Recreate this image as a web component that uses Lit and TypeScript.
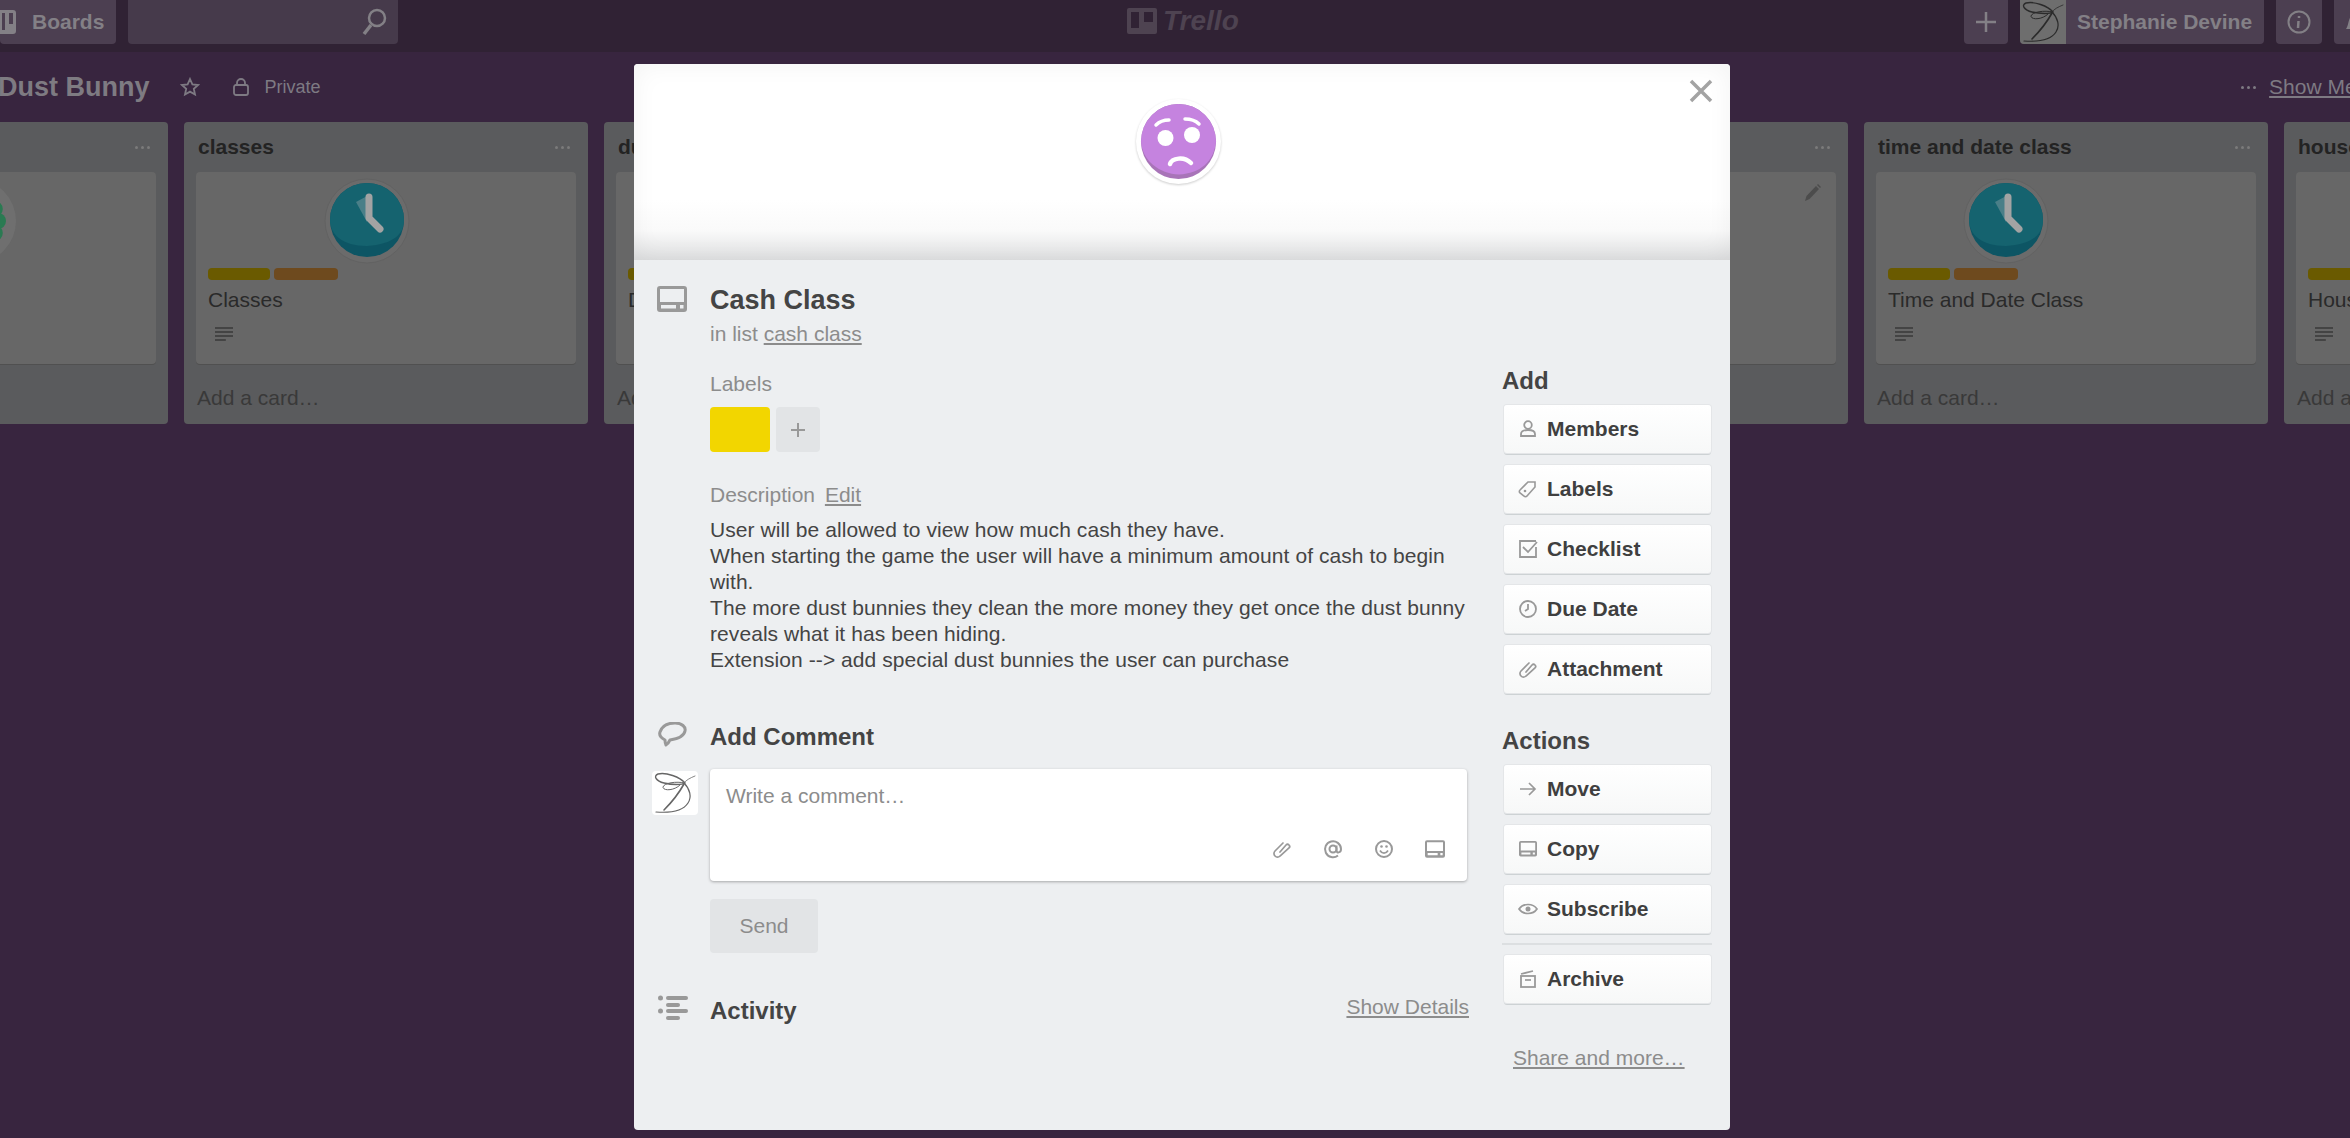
import { LitElement, html, svg, css } from "lit";
import { customElement } from "lit/decorators.js";

const scribble = svg`
  <g fill="none" stroke="currentColor" stroke-linecap="round">
    <path d="M33 12C28 6 14 1 6 3 1 5 4 10 12 12c8 2 18 2 21 0" stroke-width="1.400"/>
    <path d="M33 12c-9-2-21 0-22 4 0 4 11 4 17-2" stroke-width="1"/>
    <path d="M43 5c-5 2-9 4-12 8" stroke-width=".8"/>
    <path d="M32 13c-5 9-13 19-20 26" stroke-width="1.600"/>
    <path d="M32 12c6 6 8 14 4 20-5 8-18 10-32 9" stroke-width="1.200"/>
  </g>`;

const cardBackIcon = svg`<path fill-rule="evenodd" d="M3 0h24a3 3 0 0 1 3 3v20a3 3 0 0 1-3 3H3a3 3 0 0 1-3-3V3a3 3 0 0 1 3-3zm0 3v13h24V3H3zm1 16v3.500h15V19H4zm19 0v3.500h3.500V19H23z"/>`;

const icons: Record<string, unknown> = {
  member: svg`<circle cx="10" cy="6" r="3.800" fill="none" stroke="currentColor" stroke-width="1.800"/><path d="M3 17v-2c0-3 3-4 7-4s7 1 7 4v2z" fill="none" stroke="currentColor" stroke-width="1.800"/>`,
  label: svg`<path d="M2 11l8-8h7v5l-8 9a2 2 0 0 1-3 0l-4-3a2 2 0 0 1 0-3z" fill="none" stroke="currentColor" stroke-width="1.600"/><circle cx="7" cy="12" r="1.300" fill="currentColor"/>`,
  check: svg`<path d="M18 8v10H2V2h16" fill="none" stroke="currentColor" stroke-width="1.800"/><path d="M5 8l5 5 9-10" fill="none" stroke="currentColor" stroke-width="1.800"/>`,
  clock: svg`<circle cx="10" cy="10" r="8" fill="none" stroke="currentColor" stroke-width="1.800"/><path d="M10 5v5l-3 2" fill="none" stroke="currentColor" stroke-width="1.800"/>`,
  clip: svg`<path d="M8 13l6-7a2.100 2.100 0 0 1 3 3l-9 8a3.500 3.500 0 0 1-5-5l8-8" fill="none" stroke="currentColor" stroke-width="1.700" stroke-linecap="round"/>`,
  move: svg`<path d="M2 10h15M11 4l6 6-6 6" fill="none" stroke="currentColor" stroke-width="1.700"/>`,
  copy: svg`<g transform="translate(1 2) scale(.6)" fill="currentColor">${cardBackIcon}</g>`,
  eye: svg`<path d="M1 10c4-6 14-6 18 0-4 6-14 6-18 0z" fill="none" stroke="currentColor" stroke-width="1.700"/><circle cx="10" cy="10" r="2.500" fill="currentColor"/>`,
  archive: svg`<path d="M3 5l12-3" stroke="currentColor" stroke-width="1.700" fill="none"/><rect x="3" y="7" width="14" height="11" fill="none" stroke="currentColor" stroke-width="1.800"/><path d="M7 11h6" stroke="currentColor" stroke-width="1.700"/>`,
  at: svg`<circle cx="10" cy="10" r="3.500" fill="none" stroke="currentColor" stroke-width="2"/><path d="M13.500 6.500v5c0 3 4.500 2.500 4.500-1.500a8 8 0 1 0-3 6.500" fill="none" stroke="currentColor" stroke-width="2"/>`,
  smile: svg`<circle cx="10" cy="10" r="8" fill="none" stroke="currentColor" stroke-width="2"/><circle cx="7.500" cy="7.500" r="1.300" fill="currentColor"/><circle cx="12.500" cy="7.500" r="1.300" fill="currentColor"/><path d="M6 11.500c2 3.500 6 3.500 8 0" fill="none" stroke="currentColor" stroke-width="1.700"/>`,
};

function icon(name: string, size = 20) {
  return html`<svg width=${size} height=${size} viewBox="0 0 20 20">${icons[name]}</svg>`;
}

const clockSticker = svg`
  <circle cx="43" cy="43" r="42" fill="#6b6b6b" stroke="#626262"/>
  <circle cx="43" cy="42" r="37" fill="#0d5564"/>
  <path d="M6 42a37 37 0 0 1 74 0c0 14-10 24-37 26C18 68 6 56 6 42z" fill="#15636f"/>
  <path d="M45 17L32 24l11 20z" fill="#4a7f88"/>
  <path d="M45 19v21l11 11" fill="none" stroke="#a3a3a3" stroke-width="7" stroke-linecap="round" stroke-linejoin="round"/>`;

const greenSticker = svg`
  <circle cx="43" cy="43" r="42" fill="#6f6f6f"/>
  <circle cx="43" cy="43" r="28" fill="#246b48"/>
  ${[-60, -30, 0, 30, 60].map((a) => {
    const r = (a * Math.PI) / 180;
    return svg`<circle cx=${43 + 24 * Math.cos(r)} cy=${43 + 24 * Math.sin(r)} r="8" fill="#2a7a52"/>`;
  })}`;

interface Board {
  name: string;
  card?: string;
  labels?: number[];
  sticker?: unknown;
  stickerLeft?: number;
  pencil?: boolean;
}

const lists: Board[] = [
  { name: "", sticker: greenSticker, stickerLeft: 155 },
  { name: "classes", card: "Classes", labels: [62, 64], sticker: clockSticker, stickerLeft: 128 },
  { name: "dust bunny class", card: "Dust Bunny Class", labels: [62, 64] },
  { name: "", card: "", labels: [] },
  { name: "", pencil: true },
  { name: "time and date class", card: "Time and Date Class", labels: [62, 64], sticker: clockSticker, stickerLeft: 87 },
  { name: "house class", card: "House Class", labels: [62, 64] },
];

const addButtons = [
  ["member", "Members"],
  ["label", "Labels"],
  ["check", "Checklist"],
  ["clock", "Due Date"],
  ["clip", "Attachment"],
];
const actionButtons = [
  ["move", "Move"],
  ["copy", "Copy"],
  ["eye", "Subscribe"],
];

@customElement("app-root")
export class AppRoot extends LitElement {
  static styles = css`
    :host {
      display: block;
      position: relative;
      height: 1138px;
      overflow: hidden;
      background: #38253f;
      font-family: "Liberation Sans", Arial, sans-serif;
      font-size: 21px;
      color: #444;
    }
    svg {
      display: block;
      flex: none;
    }

    .topbar {
      display: flex;
      align-items: flex-start;
      height: 52px;
      background: #302234;
      color: #838086;
      font-weight: 700;
    }
    .topbar__btn {
      display: flex;
      align-items: center;
      justify-content: center;
      height: 44px;
      border-radius: 0 0 4px 4px;
      background: #4c3f51;
      flex: none;
    }
    .topbar__boards {
      width: 116px;
      justify-content: flex-start;
      gap: 16px;
    }
    .topbar__search {
      width: 270px;
      margin-left: 12px;
      background: #463a4b;
      justify-content: flex-end;
      padding-right: 10px;
      box-sizing: border-box;
    }
    .topbar__logo {
      display: flex;
      align-items: center;
      gap: 6px;
      height: 42px;
      margin-left: 729px;
      color: #4e4351;
      font-size: 28px;
      font-style: italic;
    }
    .topbar__right {
      display: flex;
      gap: 12px;
      margin-left: auto;
      margin-right: -30px;
    }
    .topbar__square {
      width: 44px;
    }
    .topbar__user {
      width: 244px;
      justify-content: flex-start;
      gap: 11px;
      overflow: hidden;
    }
    .topbar__avatar {
      width: 46px;
      height: 44px;
      background: #6e6e6e;
      color: #2b2b2b;
    }

    .boardbar {
      display: flex;
      align-items: center;
      height: 70px;
      color: #7e7a83;
      font-size: 18px;
    }
    .boardbar__title {
      margin-left: -2px;
      font-size: 27px;
      font-weight: 700;
      color: #7e7b82;
    }
    .boardbar__star {
      margin-left: 30px;
    }
    .boardbar__lock {
      margin-left: 33px;
    }
    .boardbar__private {
      margin-left: 16px;
    }
    .boardbar__right {
      display: flex;
      align-items: center;
      gap: 13px;
      margin-left: auto;
      margin-right: -30px;
      font-size: 21px;
    }
    .dots {
      display: flex;
      gap: 3px;
    }
    .dots i {
      width: 3px;
      height: 3px;
      border-radius: 50%;
      background: currentColor;
    }
    .boardbar__menu {
      text-decoration: underline;
    }

    .lists {
      display: flex;
      align-items: flex-start;
      gap: 16px;
      margin-left: -236px;
    }
    .list {
      flex: none;
      width: 404px;
      height: 302px;
      box-sizing: border-box;
      padding: 0 12px;
      border-radius: 4px;
      background: #5a5b5d;
    }
    .list__head {
      display: flex;
      align-items: center;
      justify-content: space-between;
      height: 50px;
      padding: 0 6px 0 2px;
      color: #232323;
      font-weight: 700;
      white-space: nowrap;
    }
    .list__head .dots {
      color: #7b7b7b;
    }
    .card {
      position: relative;
      height: 192px;
      border-radius: 4px;
      background: #676767;
      box-shadow: 0 1px 0 #505050;
      color: #2a2a2a;
    }
    .card__sticker {
      position: absolute;
      top: 6px;
    }
    .card__pencil {
      position: absolute;
      top: 12px;
      right: 14px;
      color: #4c4c4c;
    }
    .card__body {
      padding: 96px 12px 0;
    }
    .card__labels {
      display: flex;
      gap: 4px;
      height: 12px;
    }
    .card__labels span {
      height: 12px;
      border-radius: 4px;
      background: #6a5a00;
    }
    .card__labels span + span {
      background: #6e4a1e;
    }
    .card__title {
      margin-top: 7px;
      line-height: 26px;
      white-space: nowrap;
    }
    .card__badge {
      margin: 13px 0 0 7px;
      color: #444;
    }
    .list__add {
      margin: 21px 1px 0;
      line-height: 26px;
      color: #393939;
    }

    .modal {
      position: absolute;
      left: 634px;
      top: 64px;
      width: 1096px;
      height: 1066px;
      border-radius: 4px;
      background: #edeff1;
      overflow: hidden;
    }
    .cover {
      position: relative;
      display: flex;
      justify-content: center;
      box-sizing: border-box;
      height: 196px;
      padding: 34px 0 0 0;
      background: linear-gradient(to top, #dfe0e1, #fafafa 30px, #fff 60px);
      box-shadow: inset 0 0 26px rgba(0, 0, 0, 0.05);
    }
    .cover__sticker {
      margin-left: -8px;
      width: 87px;
      height: 88px;
      filter: drop-shadow(0 1px 1px rgba(0, 0, 0, 0.2));
    }
    .cover__close {
      position: absolute;
      top: 15px;
      right: 17px;
      color: #a3a3a3;
    }
    .modal__body {
      display: flex;
      align-items: flex-start;
    }
    .main {
      flex: none;
      width: 833px;
    }
    .row {
      display: flex;
    }
    .gutter {
      flex: none;
      display: flex;
      justify-content: center;
      width: 76px;
      color: #999;
    }
    .gutter--shift {
      padding-left: 2px;
      box-sizing: border-box;
    }
    .col {
      flex: 1;
      min-width: 0;
    }
    .title {
      margin-top: 22px;
      font-size: 27px;
      line-height: 36px;
      font-weight: 700;
    }
    .gutter--title {
      padding-top: 26px;
    }
    .muted {
      color: #8c8c8c;
    }
    .sub {
      margin-top: 3px;
      line-height: 26px;
    }
    .sub a,
    .link {
      color: #8c8c8c;
      text-decoration: underline;
    }
    .field {
      margin-top: 24px;
      line-height: 26px;
    }
    .chips {
      display: flex;
      gap: 6px;
      margin-top: 10px;
    }
    .chip {
      width: 60px;
      height: 45px;
      border-radius: 4px;
      background: #f2d600;
    }
    .chip--add {
      display: flex;
      align-items: center;
      justify-content: center;
      width: 44px;
      background: #e2e4e6;
      color: #999;
    }
    .desc-head {
      margin-top: 30px;
      line-height: 26px;
    }
    .desc-head .link {
      margin-left: 4px;
    }
    .desc {
      margin: 9px -8px 0 0;
      line-height: 26px;
      letter-spacing: 0.07px;
      color: #444;
    }
    .section-title {
      font-size: 24px;
      line-height: 30px;
      font-weight: 700;
    }
    .comment {
      margin-top: 49px;
    }
    .avatar {
      margin: 19px 0 0 18px;
      width: 46px;
      height: 44px;
      border-radius: 4px;
      background: #fff;
      color: #666;
    }
    .gutter--avatar {
      justify-content: flex-start;
    }
    .box {
      position: relative;
      margin-top: 17px;
      height: 112px;
      box-sizing: border-box;
      padding: 14px 16px;
      line-height: 26px;
      border-radius: 4px;
      background: #fff;
      box-shadow: 0 1px 3px rgba(0, 0, 0, 0.3);
      color: #8c8c8c;
    }
    .box__tools {
      position: absolute;
      right: 22px;
      bottom: 22px;
      display: flex;
      gap: 31px;
      color: #999;
    }
    .send {
      display: flex;
      align-items: center;
      justify-content: center;
      margin-top: 18px;
      width: 108px;
      height: 54px;
      border-radius: 4px;
      background: #e2e4e6;
      color: #8c8c8c;
    }
    .activity {
      margin-top: 42px;
    }
    .activity .col {
      display: flex;
      justify-content: space-between;
      align-items: flex-start;
      padding-top: 1px;
    }
    .activity .link {
      margin-right: -2px;
      line-height: 22px;
    }

    .side {
      flex: none;
      width: 210px;
      margin-left: 35px;
      padding-top: 106px;
    }
    .side__title {
      font-size: 24px;
      line-height: 30px;
      font-weight: 700;
    }
    .side__title--actions {
      margin-top: 33px;
    }
    .side__btns {
      display: flex;
      flex-direction: column;
      gap: 12px;
      margin: 9px 1px 0 2px;
    }
    .btn {
      display: flex;
      align-items: center;
      height: 48px;
      box-sizing: border-box;
      padding: 0 0 1px 14px;
      gap: 9px;
      border-radius: 3px;
      background: linear-gradient(#fff, #f7f8f8);
      box-shadow: 0 0 0 1px #e4e6e8, 0 2px 0 #cdd2d4;
      font-weight: 700;
      color: #3f3f3f;
    }
    .btn svg {
      color: #999;
    }
    .side__rule {
      height: 2px;
      margin: 10px 0;
      background: #dcdfe1;
    }
    .side__btns--flush {
      margin-top: 0;
    }
    .side__share {
      display: block;
      margin: 42px 0 0 11px;
      line-height: 26px;
    }
  `;

  private dots() {
    return html`<span class="dots"><i></i><i></i><i></i></span>`;
  }

  private lines(size: number, w: number) {
    return html`<svg width=${size} height=${size} viewBox="0 0 18 18" fill="currentColor">
      <rect y="1" width=${w} height="2" /><rect y="5" width=${w} height="2" />
      <rect y="9" width=${w} height="2" /><rect y="13" width=${w * 0.6} height="2" />
    </svg>`;
  }

  private renderList(l: Board) {
    return html`<div class="list">
      <div class="list__head"><span>${l.name}</span>${this.dots()}</div>
      <div class="card">
        ${l.sticker
          ? html`<svg
              class="card__sticker"
              style="left:${l.stickerLeft}px"
              width="86"
              height="86"
              viewBox="0 0 86 86"
            >${l.sticker}</svg>`
          : ""}
        ${l.pencil
          ? html`<svg class="card__pencil" width="18" height="18" viewBox="0 0 18 18" fill="currentColor">
              <path d="M1 17l1.500-5L12 2l3 3-9.500 10zM13 1l1-1 3 3-1 1z" />
            </svg>`
          : ""}
        ${l.card
          ? html`<div class="card__body">
              <div class="card__labels">
                ${(l.labels ?? []).map((w) => html`<span style="width:${w}px"></span>`)}
              </div>
              <div class="card__title">${l.card}</div>
              <div class="card__badge">${this.lines(18, 18)}</div>
            </div>`
          : ""}
      </div>
      <div class="list__add">Add a card…</div>
    </div>`;
  }

  private renderModal() {
    return html`<div class="modal">
      <div class="cover">
        <svg class="cover__sticker" viewBox="0 0 87 88">
          <circle cx="43.500" cy="43.500" r="42.500" fill="#fff" />
          <circle cx="43.500" cy="43.500" r="37.500" fill="#a874b8" />
          <path d="M6 43.500a37.500 37.500 0 0 1 75 0c-2 20-16 32-37 33C24 76 7 62 6 43.500z" fill="#c583df" />
          <circle cx="30.500" cy="40" r="8" fill="#fff" />
          <circle cx="57" cy="37" r="8" fill="#fff" />
          <path d="M21 27c3-3 8-5 13-5M50 21c5 0 10 1 14 5" fill="none" stroke="#fff" stroke-width="3.500" stroke-linecap="round" />
          <path d="M35 66c2-6 14-8 21-1" fill="none" stroke="#fff" stroke-width="4.500" stroke-linecap="round" />
        </svg>
        <svg class="cover__close" width="24" height="24" viewBox="0 0 24 24">
          <path d="M2 2l20 20M22 2L2 22" stroke="currentColor" stroke-width="3.500" />
        </svg>
      </div>
      <div class="modal__body">
        <div class="main">
          <div class="row">
            <div class="gutter gutter--title">
              <svg width="30" height="26" viewBox="0 0 30 26" fill="currentColor">${cardBackIcon}</svg>
            </div>
            <div class="col">
              <div class="title">Cash Class</div>
              <div class="sub muted">in list <a>cash class</a></div>
              <div class="field muted">Labels</div>
              <div class="chips">
                <div class="chip"></div>
                <div class="chip chip--add">
                  <svg width="18" height="18" viewBox="0 0 18 18">
                    <path d="M9 2v14M2 9h14" stroke="currentColor" stroke-width="2" />
                  </svg>
                </div>
              </div>
              <div class="desc-head muted">Description <a class="link">Edit</a></div>
              <div class="desc">
                User will be allowed to view how much cash they have.<br />
                When starting the game the user will have a minimum amount of cash to begin with.<br />
                The more dust bunnies they clean the more money they get once the dust bunny reveals what it
                has been hiding.<br />
                Extension --> add special dust bunnies the user can purchase
              </div>
            </div>
          </div>
          <div class="row comment">
            <div class="gutter gutter--shift">
              <svg width="30" height="26" viewBox="0 0 30 26">
                <path d="M8 23c-1-2-1-4-1-5C3 16 1 13 2 10 4 4 10 1 17 1c7 0 11 4 10 8-1 6-9 8-15 9-1 2-2 4-4 5z" fill="none" stroke="currentColor" stroke-width="3" stroke-linejoin="round" />
              </svg>
            </div>
            <div class="section-title">Add Comment</div>
          </div>
          <div class="row">
            <div class="gutter gutter--avatar">
              <svg class="avatar" viewBox="0 0 46 44">${scribble}</svg>
            </div>
            <div class="col">
              <div class="box">
                Write a comment…
                <div class="box__tools">
                  ${icon("clip")}${icon("at")}${icon("smile")}
                  <svg width="20" height="20" viewBox="0 0 30 26" fill="currentColor">${cardBackIcon}</svg>
                </div>
              </div>
              <div class="send">Send</div>
            </div>
          </div>
          <div class="row activity">
            <div class="gutter gutter--shift">
              <svg width="30" height="26" viewBox="0 0 30 26" fill="currentColor">
                <circle cx="2.500" cy="3" r="2.500" /><rect x="8" y="1" width="22" height="4" rx="2" />
                <rect x="8" y="8" width="14" height="4" rx="2" /><circle cx="2.500" cy="16" r="2.500" />
                <rect x="8" y="14" width="22" height="4" rx="2" /><rect x="8" y="21" width="14" height="4" rx="2" />
              </svg>
            </div>
            <div class="col">
              <div class="section-title">Activity</div>
              <a class="link">Show Details</a>
            </div>
          </div>
        </div>
        <div class="side">
          <div class="side__title">Add</div>
          <div class="side__btns">
            ${addButtons.map(([i, t]) => html`<div class="btn">${icon(i)}<span>${t}</span></div>`)}
          </div>
          <div class="side__title side__title--actions">Actions</div>
          <div class="side__btns">
            ${actionButtons.map(([i, t]) => html`<div class="btn">${icon(i)}<span>${t}</span></div>`)}
          </div>
          <div class="side__rule"></div>
          <div class="side__btns side__btns--flush">
            <div class="btn">${icon("archive")}<span>Archive</span></div>
          </div>
          <a class="side__share link">Share and more…</a>
        </div>
      </div>
    </div>`;
  }

  render() {
    return html`
      <div class="topbar">
        <div class="topbar__btn topbar__boards">
          <svg width="16" height="28" viewBox="0 0 16 28" fill="#838086">
            <path fill-rule="evenodd" d="M0 2h13a3 3 0 0 1 3 3v18a3 3 0 0 1-3 3H0zM2 5v17h3V5zm7 0v11h4V5z" />
          </svg>
          <span>Boards</span>
        </div>
        <div class="topbar__btn topbar__search">
          <svg width="26" height="30" viewBox="0 0 26 30">
            <circle cx="15" cy="11" r="8" fill="none" stroke="#838086" stroke-width="2.500" />
            <path d="M9 18l-7 9" stroke="#838086" stroke-width="3.500" />
          </svg>
        </div>
        <div class="topbar__logo">
          <svg width="30" height="26" viewBox="0 0 30 26" fill="currentColor">
            <path fill-rule="evenodd" d="M2 0h26a2 2 0 0 1 2 2v22a2 2 0 0 1-2 2H2a2 2 0 0 1-2-2V2a2 2 0 0 1 2-2zm2 4v16h8V4zm13 0v10h9V4z" />
          </svg>
          <span>Trello</span>
        </div>
        <div class="topbar__right">
          <div class="topbar__btn topbar__square">
            <svg width="22" height="22" viewBox="0 0 22 22">
              <path d="M11 1v20M1 11h20" stroke="#838086" stroke-width="2.500" />
            </svg>
          </div>
          <div class="topbar__btn topbar__user">
            <svg class="topbar__avatar" viewBox="0 0 46 44">${scribble}</svg>
            <span>Stephanie Devine</span>
          </div>
          <div class="topbar__btn topbar__square" style="width:46px">
            <svg width="24" height="24" viewBox="0 0 24 24">
              <circle cx="12" cy="12" r="10.500" fill="none" stroke="#838086" stroke-width="2" />
              <path d="M12 6v2M11.500 11l-.5 7" stroke="#838086" stroke-width="2.500" />
            </svg>
          </div>
          <div class="topbar__btn topbar__square" style="width:46px;justify-content:flex-start;padding-left:10px;box-sizing:border-box">
            <svg width="20" height="24" viewBox="0 0 20 24">
              <path d="M2 19c3-3 2-14 8-14s5 11 8 14z" fill="#838086" />
            </svg>
          </div>
        </div>
      </div>

      <div class="boardbar">
        <span class="boardbar__title">Dust Bunny</span>
        <svg class="boardbar__star" width="20" height="20" viewBox="0 0 20 20">
          <path d="M10 2l2.400 5.400 5.600.6-4.200 3.800 1.200 5.700L10 14.600l-5 2.900 1.200-5.700L2 8l5.600-.6z" fill="none" stroke="#7e7a83" stroke-width="1.800" />
        </svg>
        <svg class="boardbar__lock" width="16" height="18" viewBox="0 0 16 18">
          <rect x="1" y="7" width="14" height="10" rx="2" fill="none" stroke="#7e7a83" stroke-width="1.800" />
          <path d="M4 7V5a4 4 0 0 1 8 0v2" fill="none" stroke="#7e7a83" stroke-width="1.800" />
        </svg>
        <span class="boardbar__private">Private</span>
        <div class="boardbar__right">
          ${this.dots()}
          <span class="boardbar__menu">Show Menu</span>
        </div>
      </div>

      <div class="lists">${lists.map((l) => this.renderList(l))}</div>

      ${this.renderModal()}
    `;
  }
}
